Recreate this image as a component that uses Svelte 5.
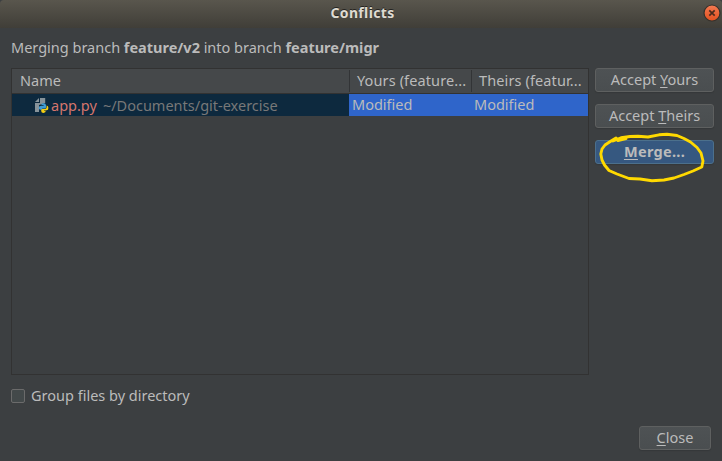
<script>
  const rows = [
    { name: 'app.py', path: '~/Documents/git-exercise', yours: 'Modified', theirs: 'Modified' },
  ];
  let grouped = $state(false);
</script>

<div class="dialog">
  <header>
    <span class="title">Conflicts</span>
    <button class="x" aria-label="Close window">
      <svg width="18" height="18" viewBox="0 0 18 18">
        <defs>
          <linearGradient id="orange" x1="0" y1="0" x2="0" y2="1">
            <stop offset="0" stop-color="#f47a52" />
            <stop offset="1" stop-color="#e2511f" />
          </linearGradient>
        </defs>
        <circle cx="9" cy="9" r="8" fill="url(#orange)" stroke="#33312c" stroke-width="1.2" />
        <path d="M6.3 6.3l5.4 5.4M11.7 6.3l-5.4 5.4" stroke="#4a2a1c" stroke-width="1.7" />
      </svg>
    </button>
  </header>

  <p class="intro"><span>Merging branch</span><b>feature/v2</b><span>into branch</span><b>feature/migr</b></p>

  <main>
    <div class="table">
      <div class="row head">
        <div class="name"><span>Name</span></div>
        <div class="yours"><span class="hy">Yours (feature...</span></div>
        <div class="theirs"><span class="hy">Theirs (featur...</span></div>
      </div>
      {#each rows as r}
        <div class="row body">
          <div class="name">
            <svg width="14" height="16" viewBox="0 0 14 16">
              <path d="M5 0H10.2V5L4 7V14H0V5H5Z" fill="#87939a" />
              <path d="M0 4L4 0V4Z" fill="#87939a" />
              <path d="M6.2 7.2Q6.2 5.2 8.5 5.2Q11 5.2 11 7.2V9.2Q11 10.4 9.8 10.4H7.8Q6.8 10.4 6.8 11.8H5.4Q3.8 11.8 3.8 9.8Q3.8 7.9 5.4 7.9H8.6V7.2Z" fill="#3e9bd2" />
              <path d="M11.6 7.6Q13.4 7.8 13.4 10Q13.4 12.2 11.6 12.2H9V12.8H10.8Q10.8 14.9 8.5 14.9Q6.2 14.9 6.2 13V11.9Q6.2 10.9 7.6 10.9H10Q11.6 10.9 11.6 9.3Z" fill="#f5ce12" />
            </svg>
            <span class="file">{r.name}</span><span class="path">{r.path}</span>
          </div>
          <div class="yours"><span>{r.yours}</span></div>
          <div class="theirs"><span>{r.theirs}</span></div>
        </div>
      {/each}
    </div>

    <div class="actions">
      <button class="btn"><span>Accept <u>Y</u>ours</span></button>
      <button class="btn"><span>Accept <u>T</u>heirs</span></button>
      <button class="btn primary"><span><u>M</u>erge...</span></button>
      <svg class="ring" width="112" height="56" viewBox="596 130 112 56">
        <path d="M626 138.5L618 140.5L616 138L611 141L605 145L602 149L600.8 154L602 160L604.5 165L609 170.5L617 174L629 178.5L640 179L652 180.8L664 180L674 178L684 174.5L693 171L701.8 167L703 161L701 153L697 147.5L690.5 142L684 138.5L677 135.5L667 134.3L659 134.8L648 137L638 136.3L630 136.5L621 137.8L613 141" />
      </svg>
    </div>
  </main>

  <label><input type="checkbox" bind:checked={grouped} /><span>Group files by directory</span></label>

  <footer><button class="btn close"><span><u>C</u>lose</span></button></footer>
</div>

<style>
  :global(body) { margin: 0; }
  .dialog {
    width: 722px; height: 461px; box-sizing: border-box; overflow: hidden;
    display: flex; flex-direction: column;
    background: #3c3f41; color: #bbbbbb;
    font: 14.5px/20px "Noto Sans", sans-serif;
  }
  span, b { white-space: pre; }
  header {
    height: 28px; flex: none; display: grid; grid-template-columns: 1fr auto 1fr;
    align-items: center; box-sizing: border-box; padding-right: 1px;
    background: linear-gradient(#59564d, #403e38); border-radius: 4px 4px 0 0;
  }
  .title { grid-column: 2; font-weight: 700; font-size: 14px; letter-spacing: 0.35px; color: #dfdbd2; text-shadow: 0 -1px #24231f; margin-left: 4px; margin-top: -2px; }
  .x { justify-self: end; padding: 0; border: 0; background: none; display: flex; margin-top: -2px; }
  .intro { margin: 9px 0 11px 11px; height: 20px; flex: none; display: flex; gap: 3.7px; }
  main { display: flex; gap: 6px; padding-left: 11px; flex: none; }
  .table { width: 578px; height: 307px; box-sizing: border-box; border: 1px solid #323232; flex: none; }
  .row { display: grid; grid-template-columns: 337px 122px 117px; }
  .row > div { display: flex; align-items: center; min-width: 0; }
  .head { height: 25px; background: #45484a; border-bottom: 1px solid #323232; box-sizing: border-box; }
  .head > div { padding-left: 8px; }
  .head span { position: relative; top: -1px; }
  .hy { letter-spacing: 0.12px; }
  .head .yours, .head .theirs { border-left: 1px solid #323436; margin: 1px 0; padding-left: 7px; }
  .body { height: 22px; background: #0d293e; }
  .body .name { padding-left: 23px; }
  .body .name svg { margin: 2px 2px 0 0; }
  .body .yours, .body .theirs { background: #2f65ca; padding-left: 3px; padding-bottom: 2px; }
  .file { color: #d5756c; margin-right: 6px; }
  .path { color: #787878; }
  .actions { position: relative; display: flex; flex-direction: column; gap: 12px; width: 119px; }
  .btn {
    height: 24px; width: 100%; box-sizing: border-box; padding: 0 0 2px; border: 1px solid #5e6060; border-radius: 3px;
    background: linear-gradient(#4e5254, #4a4e50); color: #bbbbbb; font: inherit; line-height: 20px;
    box-shadow: 0 1px 1px #35383a; display: flex; justify-content: center; align-items: center;
  }
  .primary { background: #365880; border-color: #4c708c; font-weight: 700; letter-spacing: 0.3px; }
  u { text-decoration: underline; text-decoration-thickness: 1px; text-underline-offset: 2px; text-decoration-skip-ink: none; }
  .ring { position: absolute; left: 1px; top: 62px; fill: none; stroke: #ffd900; stroke-width: 2.9; stroke-linejoin: round; stroke-linecap: round; }
  label { display: flex; align-items: center; gap: 6px; margin: 11px 0 0 11px; height: 20px; flex: none; }
  label span { position: relative; top: -1px; }
  footer { display: flex; justify-content: flex-end; padding: 20px 11px 0 0; }
  input { appearance: none; width: 14px; height: 14px; margin: 0; box-sizing: border-box; border: 1px solid #6b6b6b; border-radius: 2px; background: #43494a; }
  .close { width: 72px; }
</style>
